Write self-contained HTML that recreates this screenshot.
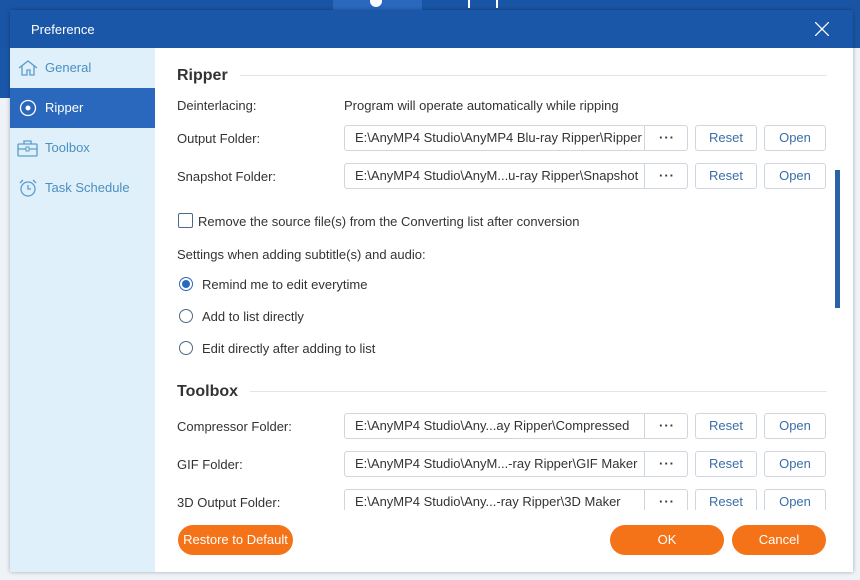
<!DOCTYPE html><html><head><style>
body{margin:0;width:860px;height:580px;overflow:hidden;background:#1a55a5;font-family:"Liberation Sans",sans-serif;font-size:13px;color:#333;position:relative}
.abs{position:absolute}
.bg2{left:0;top:48px;width:860px;height:532px;background:#eef3f8}
.dlg{left:10px;top:10px;width:843px;height:562px;background:#fff;box-shadow:0 0 4px rgba(0,0,0,.3)}
.tb{left:0;top:0;width:843px;height:38px;background:#1b57a8;color:#fff;font-size:13px}
.side{left:0;top:38px;width:145px;height:524px;background:#dff0fb}
.si{position:absolute;left:0;width:145px;height:40px;line-height:40px;color:#4a8fc0;font-size:13px}
.si span{position:absolute;left:35px}
.si.act{background:#2a68be;color:#fff}
.h{font-weight:bold;font-size:16px;color:#333}
.line{height:1px;background:#dde6ee}
.lbl{left:177px}
.inp{left:344px;width:344px;height:26px;border:1px solid #cfd6de;border-radius:3px;box-sizing:border-box;line-height:24px}
.inp .t{position:absolute;left:10px}
.inp .d{position:absolute;left:299px;top:0;width:44px;height:24px;border-left:1px solid #cfd6de;text-align:center;letter-spacing:1px;font-weight:bold}
.btn{width:62px;height:26px;border:1px solid #cfd6de;border-radius:3px;box-sizing:border-box;text-align:center;line-height:24px;color:#3b6ea8}
.ob{height:30px;border-radius:15px;background:#f47318;color:#fff;text-align:center;line-height:30px;font-size:13px}
.rad{left:179px;width:14px;height:14px;border:1px solid #2a68be;border-radius:50%;box-sizing:border-box}
</style></head><body>
<div class="abs" style="left:333px;top:0;width:89px;height:10px;background:#2a68be"></div>
<div class="abs" style="left:370px;top:0;width:12px;height:7px;background:#fff;border-radius:0 0 6px 6px"></div>
<div class="abs" style="left:468px;top:0;width:30px;height:8px;border-left:2px solid #fff;border-right:2px solid #fff;box-sizing:border-box"></div>
<div class="abs bg2"></div>
<div class="abs" style="left:0;top:48px;width:10px;height:50px;background:#1b57a8"></div>
<div class="abs dlg">
 <div class="abs tb"><span class="abs" style="left:21px;top:12px">Preference</span>
 <svg class="abs" style="left:805px;top:12px" width="14" height="14"><path d="M0 0L14 14M14 0L0 14" stroke="#fff" stroke-width="1.3"/></svg></div>
 <div class="abs side">
  <div class="si" style="top:0"><svg class="abs" style="left:8px;top:11px" width="20" height="18"><path d="M1 9L10 2L19 9M4 7V16H9V11H12V16H16V7" fill="none" stroke="#5a9ccc" stroke-width="1.3"/></svg><span>General</span></div>
  <div class="si act" style="top:40px"><svg class="abs" style="left:9px;top:11px" width="18" height="18"><circle cx="9" cy="9" r="7.5" fill="none" stroke="#fff" stroke-width="1.3"/><circle cx="9" cy="9" r="2.5" fill="#fff"/></svg><span>Ripper</span></div>
  <div class="si" style="top:80px"><svg class="abs" style="left:7px;top:11px" width="22" height="18"><rect x="1" y="5" width="19" height="12" rx="1" fill="none" stroke="#5a9ccc" stroke-width="1.3"/><path d="M7 5V2H14V5M1 10H20" fill="none" stroke="#5a9ccc" stroke-width="1.3"/><rect x="9" y="8" width="3" height="4" fill="#dff0fb" stroke="#5a9ccc"/></svg><span>Toolbox</span></div>
  <div class="si" style="top:120px"><svg class="abs" style="left:8px;top:11px" width="20" height="18"><circle cx="10" cy="10" r="7" fill="none" stroke="#5a9ccc" stroke-width="1.3"/><path d="M10 6V10H13M2 4L5 1M18 4L15 1" fill="none" stroke="#5a9ccc" stroke-width="1.3"/></svg><span>Task Schedule</span></div>
 </div>
</div>
<div class="abs h" style="left:177px;top:67px">Ripper</div>
<div class="abs line" style="left:240px;top:75px;width:587px"></div>
<div class="abs lbl" style="top:98px">Deinterlacing:</div>
<div class="abs" style="left:344px;top:98px">Program will operate automatically while ripping</div>

<div class="abs lbl" style="top:131px">Output Folder:</div>
<div class="abs inp" style="top:125px"><span class="t">E:\AnyMP4 Studio\AnyMP4 Blu-ray Ripper\Ripper</span><span class="d">···</span></div>
<div class="abs btn" style="left:695px;top:125px">Reset</div><div class="abs btn" style="left:764px;top:125px">Open</div>

<div class="abs lbl" style="top:169px">Snapshot Folder:</div>
<div class="abs inp" style="top:163px"><span class="t">E:\AnyMP4 Studio\AnyM...u-ray Ripper\Snapshot</span><span class="d">···</span></div>
<div class="abs btn" style="left:695px;top:163px">Reset</div><div class="abs btn" style="left:764px;top:163px">Open</div>

<div class="abs" style="left:835px;top:170px;width:5px;height:138px;background:#2a62a6"></div>

<div class="abs" style="left:178px;top:213px;width:15px;height:15px;border:1px solid #4a6a8a;border-radius:2px;box-sizing:border-box"></div>
<div class="abs" style="left:198px;top:214px">Remove the source file(s) from the Converting list after conversion</div>
<div class="abs lbl" style="top:247px">Settings when adding subtitle(s) and audio:</div>
<div class="abs rad" style="top:277px"><div style="position:absolute;left:2px;top:2px;width:8px;height:8px;border-radius:50%;background:#2a68be"></div></div>
<div class="abs" style="left:202px;top:277px">Remind me to edit everytime</div>
<div class="abs rad" style="top:309px;border-color:#4a6a8a"></div>
<div class="abs" style="left:202px;top:309px">Add to list directly</div>
<div class="abs rad" style="top:341px;border-color:#4a6a8a"></div>
<div class="abs" style="left:202px;top:341px">Edit directly after adding to list</div>

<div class="abs h" style="left:177px;top:383px">Toolbox</div>
<div class="abs line" style="left:250px;top:391px;width:577px"></div>

<div class="abs lbl" style="top:419px">Compressor Folder:</div>
<div class="abs inp" style="top:413px"><span class="t">E:\AnyMP4 Studio\Any...ay Ripper\Compressed</span><span class="d">···</span></div>
<div class="abs btn" style="left:695px;top:413px">Reset</div><div class="abs btn" style="left:764px;top:413px">Open</div>

<div class="abs lbl" style="top:457px">GIF Folder:</div>
<div class="abs inp" style="top:451px"><span class="t">E:\AnyMP4 Studio\AnyM...-ray Ripper\GIF Maker</span><span class="d">···</span></div>
<div class="abs btn" style="left:695px;top:451px">Reset</div><div class="abs btn" style="left:764px;top:451px">Open</div>

<div class="abs" style="left:155px;top:489px;width:680px;height:21px;overflow:hidden">
<div class="abs" style="left:22px;top:6px">3D Output Folder:</div>
<div class="abs inp" style="left:189px;top:0"><span class="t">E:\AnyMP4 Studio\Any...-ray Ripper\3D Maker</span><span class="d">···</span></div>
<div class="abs btn" style="left:540px;top:0">Reset</div><div class="abs btn" style="left:609px;top:0">Open</div>
</div>

<div class="abs ob" style="left:178px;top:525px;width:115px">Restore to Default</div>
<div class="abs ob" style="left:610px;top:525px;width:114px">OK</div>
<div class="abs ob" style="left:732px;top:525px;width:94px">Cancel</div>
</body></html>
